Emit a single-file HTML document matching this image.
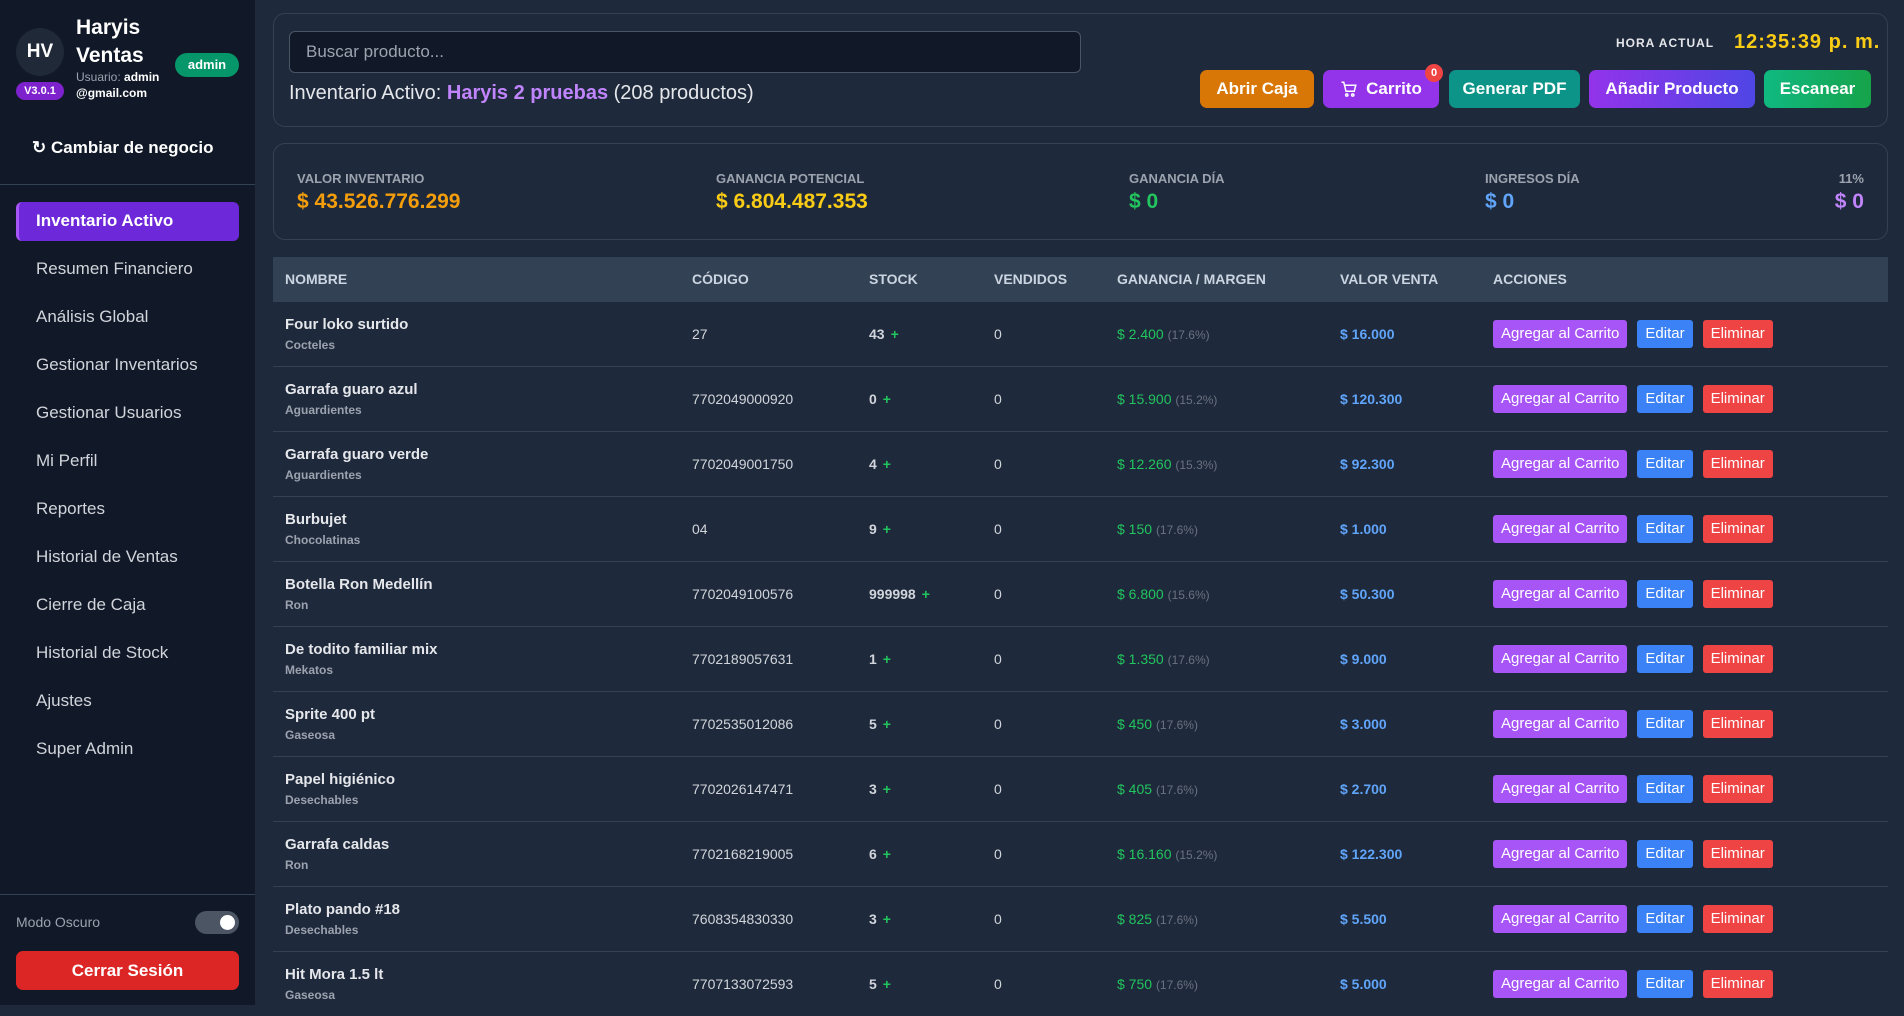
<!DOCTYPE html>
<html><head><meta charset="utf-8"><style>
*{box-sizing:border-box;margin:0;padding:0}
body{width:1904px;height:1005px;overflow:hidden;background:#1e293b;font-family:"Liberation Sans",sans-serif;color:#e5e7eb;position:relative}
.sb{position:absolute;left:0;top:0;width:255px;height:1005px;background:#111827}
.abs{position:absolute}
.nav{position:absolute;left:36px;font-size:17px;color:#d1d5db}
.card{position:absolute;left:273px;width:1615px;border:1px solid #334155;border-radius:12px;background:#1e293b}
.btn{position:absolute;top:70px;height:38px;border-radius:7px;color:#fff;font-weight:bold;font-size:17px;display:flex;align-items:center;justify-content:center}
.lbl{position:absolute;top:171px;font-size:13px;font-weight:bold;color:#9ca3af}
.val{position:absolute;top:190px;font-size:21px;font-weight:bold}
table{position:absolute;left:273px;top:257px;width:1615px;border-collapse:collapse}
th{background:#334155;height:44px;text-align:left;font-size:14px;color:#cbd5e1;font-weight:bold;padding-left:12px}
td{height:65px;border-top:1px solid #334155;font-size:14px;color:#d1d5db;padding-left:12px;vertical-align:middle}
.n{font-weight:bold;color:#e5e7eb;font-size:15px}
.c{font-size:12px;color:#9ca3af;font-weight:bold;margin-top:5px}
.st{font-weight:bold}
.pl{color:#22c55e;font-weight:bold;margin-left:6px}
.g{color:#22c55e}.p{color:#6b7280;font-size:12px}
.v{color:#60a5fa;font-weight:bold}
.b{display:inline-block;height:28px;line-height:28px;padding:0 8px;border-radius:3px;color:#fff;font-size:15px;margin-right:10px}
</style></head><body>
<div class="sb">
 <div class="abs" style="left:16px;top:28px;width:48px;height:48px;border-radius:50%;background:#1f2937;color:#fff;font-weight:bold;font-size:19px;display:flex;align-items:center;justify-content:center">HV</div>
 <div class="abs" style="left:16px;top:82px;width:48px;height:18px;border-radius:9px;background:#7e22ce;color:#fff;font-size:11px;font-weight:bold;text-align:center;line-height:18px">V3.0.1</div>
 <div class="abs" style="left:76px;top:14px;font-size:21px;font-weight:bold;color:#fff;line-height:28px">Haryis<br>Ventas</div>
 <div class="abs" style="left:175px;top:53px;width:64px;height:24px;border-radius:12px;background:#059669;color:#fff;font-size:13px;font-weight:bold;text-align:center;line-height:24px">admin</div>
 <div class="abs" style="left:76px;top:69px;width:90px;font-size:12px;line-height:16px;color:#9ca3af;word-break:break-all">Usuario: <b style="color:#fff">admin@gmail.com</b></div>
 <div class="abs" style="left:32px;top:138px;font-size:17px;font-weight:bold;color:#fff">↻ Cambiar de negocio</div>
 <div class="abs" style="left:0;top:184px;width:255px;height:1px;background:#334155"></div>
 <div class="abs" style="left:16px;top:202px;width:223px;height:39px;border-radius:6px;background:#6d28d9;border-left:3px solid #a855f7"></div>
 <div class="nav" style="top:211px;color:#fff;font-weight:bold">Inventario Activo</div>
 <div class="nav" style="top:259px">Resumen Financiero</div>
 <div class="nav" style="top:307px">Análisis Global</div>
 <div class="nav" style="top:355px">Gestionar Inventarios</div>
 <div class="nav" style="top:403px">Gestionar Usuarios</div>
 <div class="nav" style="top:451px">Mi Perfil</div>
 <div class="nav" style="top:499px">Reportes</div>
 <div class="nav" style="top:547px">Historial de Ventas</div>
 <div class="nav" style="top:595px">Cierre de Caja</div>
 <div class="nav" style="top:643px">Historial de Stock</div>
 <div class="nav" style="top:691px">Ajustes</div>
 <div class="nav" style="top:739px">Super Admin</div>
 <div class="abs" style="left:0;top:894px;width:255px;height:1px;background:#334155"></div>
 <div class="abs" style="left:16px;top:914px;font-size:14px;color:#9ca3af">Modo Oscuro</div>
 <div class="abs" style="left:195px;top:911px;width:44px;height:23px;border-radius:12px;background:#4b5563"><div style="position:absolute;right:4px;top:4px;width:15px;height:15px;border-radius:50%;background:#fff"></div></div>
 <div class="abs" style="left:16px;top:951px;width:223px;height:39px;border-radius:7px;background:#dc2626;color:#fff;font-weight:bold;font-size:17px;text-align:center;line-height:39px">Cerrar Sesión</div>
</div>

<div class="card" style="top:13px;height:114px"></div>
<div class="abs" style="left:289px;top:31px;width:792px;height:42px;border:1px solid #4b5563;border-radius:6px;background:#111827;color:#9ca3af;font-size:17px;padding:10px 16px">Buscar producto...</div>
<div class="abs" style="left:289px;top:82px;font-size:20px;color:#e5e7eb">Inventario Activo: <b style="color:#c084fc">Haryis 2 pruebas</b> (208 productos)</div>
<div class="abs" style="left:1616px;top:36px;font-size:12px;font-weight:bold;color:#e5e7eb;letter-spacing:1px">HORA ACTUAL</div>
<div class="abs" style="left:1734px;top:31px;font-size:20px;font-weight:bold;color:#facc15;letter-spacing:1px">12:35:39 p. m.</div>
<div class="btn" style="left:1200px;width:114px;background:#d97706">Abrir Caja</div>
<div class="btn" style="left:1323px;width:116px;background:#9333ea"><svg width="18" height="18" viewBox="0 0 24 24" fill="none" stroke="#fff" stroke-width="2" style="margin-right:8px"><path d="M2 3h3l3 12h11l2-8H6"/><circle cx="9" cy="20" r="1.5"/><circle cx="17" cy="20" r="1.5"/></svg>Carrito</div>
<div class="abs" style="left:1425px;top:64px;width:18px;height:18px;border-radius:50%;background:#ef4444;color:#fff;font-size:11px;font-weight:bold;text-align:center;line-height:18px">0</div>
<div class="btn" style="left:1449px;width:131px;background:#0d9488">Generar PDF</div>
<div class="btn" style="left:1589px;width:166px;background:linear-gradient(90deg,#9333ea,#4f46e5)">Añadir Producto</div>
<div class="btn" style="left:1764px;width:107px;background:linear-gradient(90deg,#10b981,#16a34a)">Escanear</div>

<div class="card" style="top:143px;height:97px"></div>
<div class="lbl" style="left:297px">VALOR INVENTARIO</div><div class="val" style="left:297px;color:#f59e0b">$ 43.526.776.299</div>
<div class="lbl" style="left:716px">GANANCIA POTENCIAL</div><div class="val" style="left:716px;color:#facc15">$ 6.804.487.353</div>
<div class="lbl" style="left:1129px">GANANCIA DÍA</div><div class="val" style="left:1129px;color:#22c55e">$ 0</div>
<div class="lbl" style="left:1485px">INGRESOS DÍA</div><div class="val" style="left:1485px;color:#60a5fa">$ 0</div>
<div class="lbl" style="right:40px">11%</div><div class="val" style="right:40px;color:#c084fc">$ 0</div>

<table>
<colgroup><col style="width:407px"><col style="width:177px"><col style="width:125px"><col style="width:123px"><col style="width:223px"><col style="width:153px"><col></colgroup>
<tr><th>NOMBRE</th><th>CÓDIGO</th><th>STOCK</th><th>VENDIDOS</th><th>GANANCIA / MARGEN</th><th>VALOR VENTA</th><th>ACCIONES</th></tr>
<tr><td><div class="n">Four loko surtido</div><div class="c">Cocteles</div></td><td>27</td><td><span class="st">43</span><span class="pl">+</span></td><td>0</td><td><span class="g">$ 2.400</span> <span class="p">(17.6%)</span></td><td class="v">$ 16.000</td><td><span class="b" style="background:#a855f7">Agregar al Carrito</span><span class="b" style="background:#3b82f6">Editar</span><span class="b" style="background:#ef4444">Eliminar</span></td></tr>
<tr><td><div class="n">Garrafa guaro azul</div><div class="c">Aguardientes</div></td><td>7702049000920</td><td><span class="st">0</span><span class="pl">+</span></td><td>0</td><td><span class="g">$ 15.900</span> <span class="p">(15.2%)</span></td><td class="v">$ 120.300</td><td><span class="b" style="background:#a855f7">Agregar al Carrito</span><span class="b" style="background:#3b82f6">Editar</span><span class="b" style="background:#ef4444">Eliminar</span></td></tr>
<tr><td><div class="n">Garrafa guaro verde</div><div class="c">Aguardientes</div></td><td>7702049001750</td><td><span class="st">4</span><span class="pl">+</span></td><td>0</td><td><span class="g">$ 12.260</span> <span class="p">(15.3%)</span></td><td class="v">$ 92.300</td><td><span class="b" style="background:#a855f7">Agregar al Carrito</span><span class="b" style="background:#3b82f6">Editar</span><span class="b" style="background:#ef4444">Eliminar</span></td></tr>
<tr><td><div class="n">Burbujet</div><div class="c">Chocolatinas</div></td><td>04</td><td><span class="st">9</span><span class="pl">+</span></td><td>0</td><td><span class="g">$ 150</span> <span class="p">(17.6%)</span></td><td class="v">$ 1.000</td><td><span class="b" style="background:#a855f7">Agregar al Carrito</span><span class="b" style="background:#3b82f6">Editar</span><span class="b" style="background:#ef4444">Eliminar</span></td></tr>
<tr><td><div class="n">Botella Ron Medellín</div><div class="c">Ron</div></td><td>7702049100576</td><td><span class="st">999998</span><span class="pl">+</span></td><td>0</td><td><span class="g">$ 6.800</span> <span class="p">(15.6%)</span></td><td class="v">$ 50.300</td><td><span class="b" style="background:#a855f7">Agregar al Carrito</span><span class="b" style="background:#3b82f6">Editar</span><span class="b" style="background:#ef4444">Eliminar</span></td></tr>
<tr><td><div class="n">De todito familiar mix</div><div class="c">Mekatos</div></td><td>7702189057631</td><td><span class="st">1</span><span class="pl">+</span></td><td>0</td><td><span class="g">$ 1.350</span> <span class="p">(17.6%)</span></td><td class="v">$ 9.000</td><td><span class="b" style="background:#a855f7">Agregar al Carrito</span><span class="b" style="background:#3b82f6">Editar</span><span class="b" style="background:#ef4444">Eliminar</span></td></tr>
<tr><td><div class="n">Sprite 400 pt</div><div class="c">Gaseosa</div></td><td>7702535012086</td><td><span class="st">5</span><span class="pl">+</span></td><td>0</td><td><span class="g">$ 450</span> <span class="p">(17.6%)</span></td><td class="v">$ 3.000</td><td><span class="b" style="background:#a855f7">Agregar al Carrito</span><span class="b" style="background:#3b82f6">Editar</span><span class="b" style="background:#ef4444">Eliminar</span></td></tr>
<tr><td><div class="n">Papel higiénico</div><div class="c">Desechables</div></td><td>7702026147471</td><td><span class="st">3</span><span class="pl">+</span></td><td>0</td><td><span class="g">$ 405</span> <span class="p">(17.6%)</span></td><td class="v">$ 2.700</td><td><span class="b" style="background:#a855f7">Agregar al Carrito</span><span class="b" style="background:#3b82f6">Editar</span><span class="b" style="background:#ef4444">Eliminar</span></td></tr>
<tr><td><div class="n">Garrafa caldas</div><div class="c">Ron</div></td><td>7702168219005</td><td><span class="st">6</span><span class="pl">+</span></td><td>0</td><td><span class="g">$ 16.160</span> <span class="p">(15.2%)</span></td><td class="v">$ 122.300</td><td><span class="b" style="background:#a855f7">Agregar al Carrito</span><span class="b" style="background:#3b82f6">Editar</span><span class="b" style="background:#ef4444">Eliminar</span></td></tr>
<tr><td><div class="n">Plato pando #18</div><div class="c">Desechables</div></td><td>7608354830330</td><td><span class="st">3</span><span class="pl">+</span></td><td>0</td><td><span class="g">$ 825</span> <span class="p">(17.6%)</span></td><td class="v">$ 5.500</td><td><span class="b" style="background:#a855f7">Agregar al Carrito</span><span class="b" style="background:#3b82f6">Editar</span><span class="b" style="background:#ef4444">Eliminar</span></td></tr>
<tr><td><div class="n">Hit Mora 1.5 lt</div><div class="c">Gaseosa</div></td><td>7707133072593</td><td><span class="st">5</span><span class="pl">+</span></td><td>0</td><td><span class="g">$ 750</span> <span class="p">(17.6%)</span></td><td class="v">$ 5.000</td><td><span class="b" style="background:#a855f7">Agregar al Carrito</span><span class="b" style="background:#3b82f6">Editar</span><span class="b" style="background:#ef4444">Eliminar</span></td></tr>
</table>
</body></html>
